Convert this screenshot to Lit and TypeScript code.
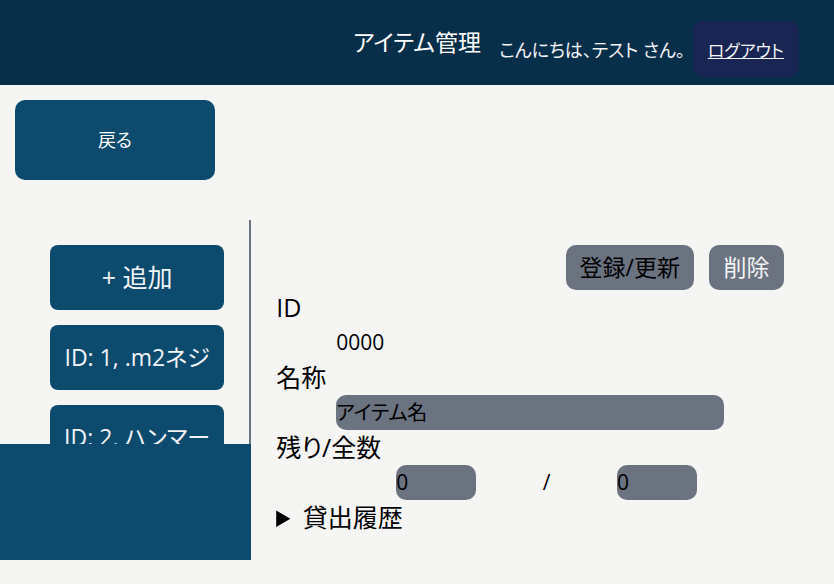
import { LitElement, html, css } from "lit";
import { customElement, state } from "lit/decorators.js";

interface Item {
  id: number;
  name: string;
}

@customElement("app-root")
export class AppRoot extends LitElement {
  @state() private items: Item[] = [
    { id: 1, name: ".m2ネジ" },
    { id: 2, name: "ハンマー" },
  ];

  static styles = css`
    :host {
      display: flex;
      flex-direction: column;
      height: 100vh;
      box-sizing: border-box;
      background: #f5f5f4;
      color: #000;
      font-family: "Open Sans", "Noto Sans CJK JP", sans-serif;
      font-size: 25px;
      line-height: 35px;
      font-feature-settings: "palt";
    }
    * {
      box-sizing: border-box;
    }
    button,
    input {
      font: inherit;
      font-feature-settings: inherit;
      color: inherit;
      border: 0;
      margin: 0;
      padding: 0;
    }
    .header {
      display: grid;
      grid-template-columns: 1fr auto 1fr;
      flex: none;
      height: 85px;
      background: #082f49;
      color: #fff;
    }
    .title {
      grid-column: 2;
      align-self: center;
      margin: 0;
      font-size: 23px;
      font-weight: 400;
    }
    .user {
      display: flex;
      align-items: center;
      justify-content: flex-end;
      align-self: end;
      gap: 8px;
      padding: 0 35px 8px 0;
      font-size: 18px;
      color: #f3f4f6;
      white-space: nowrap;
    }
    .greeting {
      padding-top: 3px;
    }
    .logout {
      padding: 3px 15px 0;
      border-radius: 10px;
      background: #192552;
      color: #f3f4f6;
      font-size: 17px;
      line-height: 53px;
    }
    .back {
      flex: none;
      width: 200px;
      height: 80px;
      margin: 15px 15px 40px;
      border-radius: 10px;
      background: #0c4a6e;
      color: #fff;
      font-size: 18px;
    }
    .main {
      display: flex;
      flex: 1;
      min-height: 0;
      margin-bottom: 24px;
    }
    .side {
      display: flex;
      flex-direction: column;
      flex: none;
      width: calc(30% + 1px);
    }
    .list {
      display: flex;
      flex-direction: column;
      flex: 1;
      min-height: 0;
      gap: 15px;
      padding: 25px 25px 0 50px;
      border-right: 2px solid #6b7280;
      overflow-y: auto;
      scrollbar-width: none;
    }
    .entry {
      flex: none;
      height: 65px;
      border-radius: 8px;
      background: #0c4a6e;
      color: #f3f4f6;
      font-size: 23px;
      white-space: nowrap;
    }
    .add {
      font-size: 25px;
    }
    .panel {
      flex: none;
      height: 116px;
      background: #0c4a6e;
    }
    .detail {
      flex: 1;
      min-width: 0;
      padding: 25px 50px 0 25px;
    }
    .actions {
      display: flex;
      justify-content: flex-end;
      gap: 15px;
    }
    .action {
      height: 45px;
      min-width: 75px;
      padding: 0 14px;
      border-radius: 10px;
      background: #6b7280;
      font-size: 23px;
    }
    .danger {
      color: #f3f4f6;
    }
    .label {
      display: block;
    }
    .value {
      display: flex;
      justify-content: space-between;
      height: 35px;
      padding: 0 60px;
      font-size: 21px;
    }
    .counts {
      padding: 0 87px 0 120px;
    }
    .field {
      width: 100%;
      height: 35px;
      border-radius: 10px;
      background: #6b7280;
    }
    .name {
      font-size: 20px;
    }
    .number {
      width: 80px;
    }
  `;

  render() {
    return html`
      <header class="header">
        <h1 class="title">アイテム管理</h1>
        <div class="user">
          <span class="greeting">こんにちは、テスト さん。</span>
          <a class="logout" href="#">ログアウト</a>
        </div>
      </header>
      <button class="back" type="button">戻る</button>
      <main class="main">
        <aside class="side">
          <div class="list">
            <button class="entry add" type="button">+ 追加</button>
            ${this.items.map(
              (item) => html`<button class="entry" type="button">ID: ${item.id}, ${item.name}</button>`
            )}
          </div>
          <div class="panel"></div>
        </aside>
        <form class="detail">
          <div class="actions">
            <button class="action" type="button">登録/更新</button>
            <button class="action danger" type="button">削除</button>
          </div>
          <label class="label" for="item-id">ID</label>
          <div class="value"><output id="item-id">0000</output></div>
          <label class="label" for="item-name">名称</label>
          <div class="value">
            <input class="field name" id="item-name" type="text" value="アイテム名" />
          </div>
          <label class="label" for="item-rest">残り/全数</label>
          <div class="value counts">
            <input class="field number" id="item-rest" type="text" inputmode="numeric" value="0" />
            <span>/</span>
            <input class="field number" type="text" inputmode="numeric" aria-label="全数" value="0" />
          </div>
          <details>
            <summary>貸出履歴</summary>
          </details>
        </form>
      </main>
    `;
  }
}
